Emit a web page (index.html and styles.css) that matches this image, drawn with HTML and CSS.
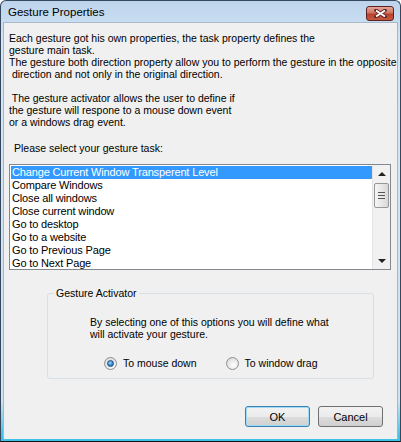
FILE: index.html
```
<!DOCTYPE html>
<html lang="en">
<head>
    <meta charset="UTF-8">
    <title>Gesture Properties</title>
    <link rel="stylesheet" href="styles.css">
</head>
<body>
    <div class="window">
        <div class="titlebar">
            <span class="title">Gesture Properties</span>
            <button class="close">
                <svg width="13" height="9" viewBox="0 0 13 9">
                    <path d="M2 1.5 L11 7.5 M11 1.5 L2 7.5" stroke="#5a2020" stroke-width="3.6" stroke-linecap="round"/>
                    <path d="M2 1.5 L11 7.5 M11 1.5 L2 7.5" stroke="#ffffff" stroke-width="2"/>
                </svg>
            </button>
        </div>
        <div class="client">
            <p class="intro">Each gesture got his own properties, the task property defines the
gesture main task.
The gesture both direction property allow you to perform the gesture in the opposite
 direction and not only in the original direction.

 The gesture activator allows the user to define if
the gesture will respone to a mouse down event
or a windows drag event.</p>
            <p class="prompt">Please select your gesture task:</p>

            <div class="listbox">
                <ul class="items">
                    <li class="selected">Change Current Window Transperent Level</li>
                    <li>Compare Windows</li>
                    <li>Close all windows</li>
                    <li>Close current window</li>
                    <li>Go to desktop</li>
                    <li>Go to a website</li>
                    <li>Go to Previous Page</li>
                    <li>Go to Next Page</li>
                </ul>
                <div class="scrollbar">
                    <span class="arrow up"></span>
                    <span class="thumb"><i></i><i></i><i></i></span>
                    <span class="track"></span>
                    <span class="arrow down"></span>
                </div>
            </div>

            <div class="group">
                <span class="group-title">Gesture Activator</span>
                <p class="group-text">By selecting one of this options you will define what<br>will activate your gesture.</p>
                <div class="options">
                    <label class="radio"><span class="dot checked"></span>To mouse down</label>
                    <label class="radio"><span class="dot"></span>To window drag</label>
                </div>
            </div>

            <div class="buttons">
                <button class="btn default">OK</button>
                <button class="btn">Cancel</button>
            </div>
        </div>
    </div>
</body>
</html>
```
FILE: styles.css
```
body {
    margin: 0;
    background: #ffffff;
    font-family: "Liberation Sans", Arial, sans-serif;
}
.window {
    width: 401px;
    height: 442px;
    box-sizing: border-box;
    border: 1px solid #34475c;
    border-bottom-color: #111;
    border-radius: 6px 6px 0 0;
    padding: 0 2px 2px 2px;
    background: linear-gradient(#bcd4ec, #d6e5f4 40px, #cfe3f3 400px, #3cc3e6 436px);
    display: flex;
    flex-direction: column;
}
.titlebar {
    height: 21px;
    display: flex;
    align-items: center;
    justify-content: space-between;
    padding: 0 4px 0 5px;
}
.title {
    font-size: 11.5px;
    color: #000;
}
.close {
    width: 28px;
    height: 15px;
    margin-top: 3px;
    padding: 0;
    border: 1px solid #5b2222;
    border-radius: 3px;
    background: linear-gradient(#e3a798, #d07462 45%, #b8412e 55%, #c9583f);
    display: flex;
    align-items: center;
    justify-content: center;
}
.client {
    flex: 1;
    background: #f0f0f0;
    border-left: 1px solid #9fb6cc;
    border-top: 1px solid #aab9c9;
    border-right: 1px solid #9fb6cc;
    font-size: 10.5px;
    color: #000;
}
.intro {
    margin: 9px 0 0 5px;
    white-space: pre;
    line-height: 12px;
}
.prompt {
    margin: 14px 0 0 10px;
    line-height: 12px;
}
.listbox {
    margin: 10px 0 0 5px;
    width: 382px;
    height: 106px;
    box-sizing: border-box;
    border: 1px solid #828790;
    background: #fff;
    display: flex;
    overflow: hidden;
}
.items {
    flex: 1;
    list-style: none;
    margin: 0;
    padding: 1px 0 0 1px;
    font-size: 11px;
    letter-spacing: -0.15px;
}
.items li {
    height: 13px;
    line-height: 13px;
    padding-left: 1px;
    white-space: nowrap;
}
.items li.selected {
    background: #3399ff;
    color: #fff;
}
.scrollbar {
    width: 17px;
    display: flex;
    flex-direction: column;
    background: #f1f1f1;
    border-left: 1px solid #e4e4e4;
}
.arrow {
    height: 17px;
    display: flex;
    align-items: center;
    justify-content: center;
}
.arrow::after {
    content: "";
    border-left: 4px solid transparent;
    border-right: 4px solid transparent;
}
.arrow.up::after {
    border-bottom: 4px solid #222;
}
.arrow.down::after {
    border-top: 4px solid #222;
}
.thumb {
    height: 25px;
    margin: 1px 1px 0 1px;
    box-sizing: border-box;
    border: 1px solid #979797;
    border-radius: 2px;
    background: linear-gradient(90deg, #f5f5f5, #e8e8e8 50%, #d8d8d8);
    display: flex;
    flex-direction: column;
    align-items: center;
    justify-content: center;
    gap: 2px;
}
.thumb i {
    width: 7px;
    height: 1px;
    background: #555;
}
.track {
    flex: 1;
}
.group {
    position: relative;
    margin: 23px 0 0 43px;
    width: 327px;
    height: 86px;
    box-sizing: border-box;
    border: 1px solid #d5dfe5;
    border-radius: 3px;
    padding: 22px 0 0 42px;
}
.group-title {
    position: absolute;
    top: -7px;
    left: 6px;
    padding: 0 2px;
    background: #f0f0f0;
    line-height: 12px;
}
.group-text {
    margin: 0;
    line-height: 12px;
}
.options {
    display: flex;
    gap: 29px;
    margin: 16px 0 0 14px;
}
.radio {
    display: flex;
    align-items: center;
    gap: 6px;
    line-height: 14px;
}
.dot {
    width: 13px;
    height: 13px;
    box-sizing: border-box;
    border: 1px solid #8e8f8f;
    border-radius: 50%;
    background: radial-gradient(circle at 60% 65%, #ffffff, #e4e4e4 60%, #cfcfcf);
    display: flex;
    align-items: center;
    justify-content: center;
}
.dot.checked::after {
    content: "";
    width: 5px;
    height: 5px;
    border: 1px solid #1c4f7e;
    border-radius: 50%;
    background: radial-gradient(circle at 40% 35%, #9fd5f7, #2d82c8 60%, #1b5c99);
}
.buttons {
    display: flex;
    justify-content: flex-end;
    gap: 8px;
    margin-top: 27px;
    padding-right: 14px;
}
.btn {
    width: 65px;
    height: 21px;
    padding: 0;
    font-family: "Liberation Sans", Arial, sans-serif;
    font-size: 11px;
    color: #000;
    border: 1px solid #707070;
    border-radius: 3px;
    background: linear-gradient(#f2f2f2, #ebebeb 50%, #dddddd 50%, #cfcfcf);
}
.btn.default {
    border-color: #3c7fb1;
    box-shadow: inset 0 0 0 1px #9ddcf6;
}
```
